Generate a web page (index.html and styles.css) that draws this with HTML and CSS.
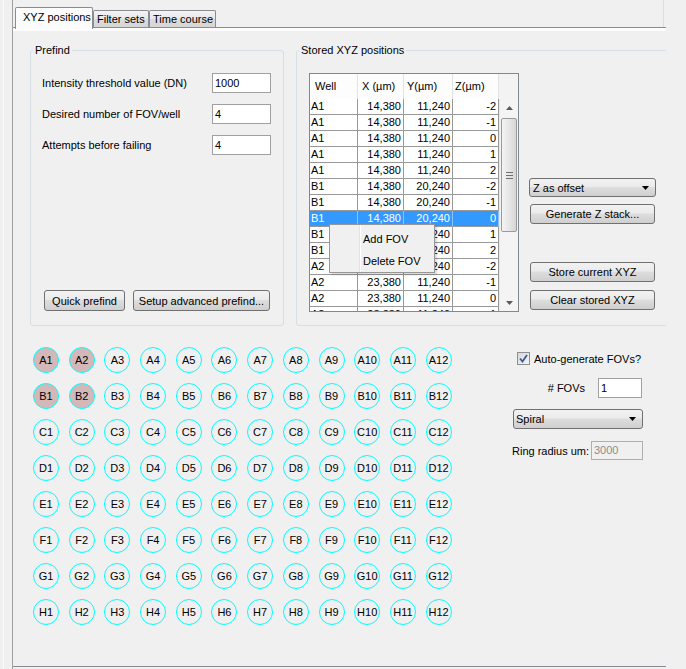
FILE: index.html
```html
<!DOCTYPE html>
<html>
<head>
<meta charset="utf-8">
<title>XYZ positions</title>
<link rel="stylesheet" href="styles.css">
</head>
<body>
<div class="screen">
  <div class="rail"></div>
  <div class="window">
    <div class="tabs">
      <div class="tab tab-active tab-xyz">XYZ positions</div>
      <div class="tab tab-idle tab-filter">Filter sets</div>
      <div class="tab tab-idle tab-time">Time course</div>
    </div>
    <div class="panel">
      <div class="top-row">
        <fieldset class="group group-prefind">
          <legend>Prefind</legend>
          <div class="prefind-body">
            <div class="field-row"><span class="label">Intensity threshold value (DN)</span><span class="input input-prefind">1000</span></div>
            <div class="field-row"><span class="label">Desired number of FOV/well</span><span class="input input-prefind">4</span></div>
            <div class="field-row"><span class="label">Attempts before failing</span><span class="input input-prefind">4</span></div>
            <div class="btn-row">
              <span class="btn btn-quick">Quick prefind</span>
              <span class="btn btn-setup">Setup advanced prefind...</span>
            </div>
          </div>
        </fieldset>
        <fieldset class="group group-stored">
          <legend>Stored XYZ positions</legend>
          <div class="stored-body">
            <div class="table">
              <div class="thead">
                <span class="th th-well">Well</span>
                <span class="th th-x">X (µm)</span>
                <span class="th th-y">Y(µm)</span>
                <span class="th th-z">Z(µm)</span>
                <span class="th th-corner"></span>
              </div>
              <div class="tbody-wrap">
                <div class="tbody">
                  <div class="tr"><span class="td td-well">A1</span><span class="td">14,380</span><span class="td">11,240</span><span class="td">-2</span></div>
                  <div class="tr"><span class="td td-well">A1</span><span class="td">14,380</span><span class="td">11,240</span><span class="td">-1</span></div>
                  <div class="tr"><span class="td td-well">A1</span><span class="td">14,380</span><span class="td">11,240</span><span class="td">0</span></div>
                  <div class="tr"><span class="td td-well">A1</span><span class="td">14,380</span><span class="td">11,240</span><span class="td">1</span></div>
                  <div class="tr"><span class="td td-well">A1</span><span class="td">14,380</span><span class="td">11,240</span><span class="td">2</span></div>
                  <div class="tr"><span class="td td-well">B1</span><span class="td">14,380</span><span class="td">20,240</span><span class="td">-2</span></div>
                  <div class="tr"><span class="td td-well">B1</span><span class="td">14,380</span><span class="td">20,240</span><span class="td">-1</span></div>
                  <div class="tr tr-selected"><span class="td td-well">B1</span><span class="td">14,380</span><span class="td">20,240</span><span class="td">0</span></div>
                  <div class="tr"><span class="td td-well">B1</span><span class="td">14,380</span><span class="td">20,240</span><span class="td">1</span></div>
                  <div class="tr"><span class="td td-well">B1</span><span class="td">14,380</span><span class="td">20,240</span><span class="td">2</span></div>
                  <div class="tr"><span class="td td-well">A2</span><span class="td">23,380</span><span class="td">11,240</span><span class="td">-2</span></div>
                  <div class="tr"><span class="td td-well">A2</span><span class="td">23,380</span><span class="td">11,240</span><span class="td">-1</span></div>
                  <div class="tr"><span class="td td-well">A2</span><span class="td">23,380</span><span class="td">11,240</span><span class="td">0</span></div>
                  <div class="tr"><span class="td td-well">A2</span><span class="td">23,380</span><span class="td">11,240</span><span class="td">1</span></div>
                </div>
                <div class="vscroll">
                  <div class="vs-btn"><svg class="vs-arrow" width="7" height="4" viewBox="0 0 7 4"><path d="M0 4 L3.5 0 L7 4 Z" fill="#5a5a5a"/></svg></div>
                  <div class="vs-thumb"><span class="grip"></span><span class="grip"></span><span class="grip"></span></div>
                  <div class="vs-fill"></div>
                  <div class="vs-btn"><svg class="vs-arrow" width="7" height="4" viewBox="0 0 7 4"><path d="M0 0 L7 0 L3.5 4 Z" fill="#5a5a5a"/></svg></div>
                </div>
              </div>
              <div class="ctx-menu">
                <div class="ctx-item">Add FOV</div>
                <div class="ctx-item">Delete FOV</div>
              </div>
            </div>
            <div class="stored-controls">
              <div class="combo combo-z"><span>Z as offset</span><svg width="7" height="4" viewBox="0 0 7 4"><path d="M0 0 L7 0 L3.5 4 Z" fill="#000"/></svg></div>
              <span class="btn btn-side btn-gen">Generate Z stack...</span>
              <span class="btn btn-side btn-store">Store current XYZ</span>
              <span class="btn btn-side btn-clear">Clear stored XYZ</span>
            </div>
          </div>
        </fieldset>
      </div>
      <div class="bottom-row">
        <div class="plate">
          <div class="well well-sel">A1</div><div class="well well-sel">A2</div><div class="well">A3</div><div class="well">A4</div><div class="well">A5</div><div class="well">A6</div><div class="well">A7</div><div class="well">A8</div><div class="well">A9</div><div class="well">A10</div><div class="well">A11</div><div class="well">A12</div>
          <div class="well well-sel">B1</div><div class="well well-sel">B2</div><div class="well">B3</div><div class="well">B4</div><div class="well">B5</div><div class="well">B6</div><div class="well">B7</div><div class="well">B8</div><div class="well">B9</div><div class="well">B10</div><div class="well">B11</div><div class="well">B12</div>
          <div class="well">C1</div><div class="well">C2</div><div class="well">C3</div><div class="well">C4</div><div class="well">C5</div><div class="well">C6</div><div class="well">C7</div><div class="well">C8</div><div class="well">C9</div><div class="well">C10</div><div class="well">C11</div><div class="well">C12</div>
          <div class="well">D1</div><div class="well">D2</div><div class="well">D3</div><div class="well">D4</div><div class="well">D5</div><div class="well">D6</div><div class="well">D7</div><div class="well">D8</div><div class="well">D9</div><div class="well">D10</div><div class="well">D11</div><div class="well">D12</div>
          <div class="well">E1</div><div class="well">E2</div><div class="well">E3</div><div class="well">E4</div><div class="well">E5</div><div class="well">E6</div><div class="well">E7</div><div class="well">E8</div><div class="well">E9</div><div class="well">E10</div><div class="well">E11</div><div class="well">E12</div>
          <div class="well">F1</div><div class="well">F2</div><div class="well">F3</div><div class="well">F4</div><div class="well">F5</div><div class="well">F6</div><div class="well">F7</div><div class="well">F8</div><div class="well">F9</div><div class="well">F10</div><div class="well">F11</div><div class="well">F12</div>
          <div class="well">G1</div><div class="well">G2</div><div class="well">G3</div><div class="well">G4</div><div class="well">G5</div><div class="well">G6</div><div class="well">G7</div><div class="well">G8</div><div class="well">G9</div><div class="well">G10</div><div class="well">G11</div><div class="well">G12</div>
          <div class="well">H1</div><div class="well">H2</div><div class="well">H3</div><div class="well">H4</div><div class="well">H5</div><div class="well">H6</div><div class="well">H7</div><div class="well">H8</div><div class="well">H9</div><div class="well">H10</div><div class="well">H11</div><div class="well">H12</div>
        </div>
        <div class="fov-opts">
          <div class="check-row">
            <span class="checkbox"><svg width="9" height="9" viewBox="0 0 9 9"><path d="M1 4.5 L3.5 7.5 L8 1" fill="none" stroke="#3c5a9a" stroke-width="1.8"/></svg></span>
            <span>Auto-generate FOVs?</span>
          </div>
          <div class="fovs-row">
            <span># FOVs</span>
            <span class="input input-fovs">1</span>
          </div>
          <div class="combo combo-spiral"><span>Spiral</span><svg width="7" height="4" viewBox="0 0 7 4"><path d="M0 0 L7 0 L3.5 4 Z" fill="#000"/></svg></div>
          <div class="ring-row">
            <span>Ring radius um:</span>
            <span class="input input-ring">3000</span>
          </div>
        </div>
      </div>
    </div>
  </div>
</div>
</body>
</html>
```
FILE: styles.css
```css
* { box-sizing: border-box; }
html, body { margin: 0; padding: 0; }
body {
  background: #f0f0f0;
  font-family: "Liberation Sans", Arial, sans-serif;
  font-size: 11px;
  color: #000;
  width: 686px;
  height: 669px;
  overflow: hidden;
}
.screen { display: flex; height: 669px; }
.rail { width: 1px; margin-left: 3px; background: #fbfbfb; flex: none; }
.window {
  margin-left: 8px;
  width: 654px;
  height: 669px;
  border-left: 1px solid #a0a0a0;
  overflow: hidden;
  flex: none;
}

/* tabs */
.tabs {
  display: flex;
  align-items: flex-end;
  height: 27px;
  width: 651px;
  border-right: 1px solid #d5dfe5;
  padding-left: 2px;
}
.tab {
  border: 1px solid #898c95;
  border-bottom: none;
  border-radius: 2px 2px 0 0;
  line-height: 13px;
  white-space: nowrap;
  flex: none;
}
.tab-active {
  height: 22px;
  margin-bottom: -2px;
  padding: 3px 0 0 7px;
  background: #fcfcfc;
  position: relative;
  z-index: 1;
  width: 78px;
}
.tab-idle {
  height: 17px;
  padding: 2px 0 0 3px;
  background: linear-gradient(#f4f4f4, #e8e8e8 50%, #dcdcdc 51%, #d6d6d6);
}
.tab-filter { width: 56px; margin-left: 0; }
.tab-time { width: 67px; }

/* panel */
.panel {
  width: 700px;
  height: 640px;
  border-top: 1px solid #898c95;
  border-bottom: 1px solid #898c95;
  box-shadow: inset 0 3px 0 #fcfcfc;
}
.top-row {
  display: flex;
  gap: 12px;
  padding: 16px 0 0 17px;
}
.group {
  margin: 0;
  padding: 0;
  border: 1px solid #d5dfe5;
  border-radius: 3px;
  min-width: 0;
}
.group legend {
  margin-left: 2px;
  padding: 0 2px;
  line-height: 13px;
}
.group-prefind { width: 254px; flex: none; }
.group-stored { flex: 1; }

.prefind-body {
  padding: 16px 12px 14px 11px;
  display: flex;
  flex-direction: column;
  gap: 11px;
}
.field-row {
  display: flex;
  align-items: center;
  justify-content: space-between;
  height: 20px;
}
.input {
  display: block;
  height: 20px;
  border: 1px solid #a0a0a0;
  background: #fff;
  padding: 0 2px;
  line-height: 18px;
}
.input-prefind { width: 59px; }

.btn-row {
  display: flex;
  gap: 8px;
  margin-top: 124px;
  padding-left: 2px;
}
.btn {
  display: flex;
  align-items: center;
  justify-content: center;
  height: 21px;
  border: 1px solid #707070;
  border-radius: 3px;
  background: linear-gradient(#f2f2f2, #ebebeb 45%, #dddddd 50%, #cfcfcf);
  white-space: nowrap;
}
.btn-quick { width: 81px; }
.btn-setup { width: 137px; }

/* stored */
.stored-body {
  padding: 16px 0 0 12px;
  display: flex;
  gap: 10px;
  align-items: flex-start;
}
.table {
  position: relative;
  width: 210px;
  height: 239px;
  border: 1px solid #828790;
  background: #fff;
  flex: none;
}
.thead {
  display: grid;
  grid-template-columns: 48px 46px 49px 46px 19px;
  height: 25px;
}
.th {
  border-right: 1px solid #e3e3e3;
  padding-left: 4px;
  line-height: 25px;
  background: #fdfdfd;
}
.th-well { padding-left: 5px; }
.th-x { padding-left: 4px; }
.th-y { padding-left: 3px; }
.th-z { padding-left: 2px; }
.th-corner { border-right: none; background: #f3f3f3; }
.tbody-wrap {
  display: flex;
  height: 212px;
  overflow: hidden;
}
.tbody { width: 189px; flex: none; }
.tr {
  display: grid;
  grid-template-columns: 48px 46px 49px 46px;
  height: 16px;
}
.td {
  border-right: 1px solid #999;
  border-bottom: 1px solid #999;
  line-height: 15px;
  text-align: right;
  padding: 0 2px 0 1px;
}
.td-well { text-align: left; }
.tr-selected .td {
  background: #3399ff;
  color: #fff;
  border-right-color: #8fc3f7;
}
.vscroll {
  width: 19px;
  display: flex;
  flex-direction: column;
  background: #f4f4f4;
  border-left: 1px solid #e8e8e8;
}
.vs-btn {
  height: 17px;
  display: flex;
  align-items: center;
  justify-content: center;
  flex: none;
}
.vs-thumb {
  margin: 2px 1px 0 1px;
  height: 114px;
  border: 1px solid #9a9a9a;
  border-radius: 2px;
  background: linear-gradient(90deg, #f4f4f4, #e6e6e6 50%, #d6d6d6);
  display: flex;
  flex-direction: column;
  align-items: center;
  justify-content: center;
  gap: 2px;
  flex: none;
}
.grip { width: 7px; height: 1px; background: #6f6f6f; }
.vs-fill { flex: 1; }

.ctx-menu {
  position: absolute;
  left: 19px;
  top: 150px;
  width: 106px;
  height: 49px;
  border: 1px solid #979797;
  background: linear-gradient(90deg, #f0f0f0 29px, #e2e3e3 29px, #e2e3e3 30px, #ffffff 30px, #ffffff 31px, #f0f0f0 31px);
  padding-top: 3px;
  box-shadow: 2px 2px 2px rgba(0,0,0,0.15);
}
.ctx-item {
  height: 22px;
  line-height: 22px;
  padding-left: 33px;
}

.stored-controls {
  display: flex;
  flex-direction: column;
  margin-top: 105px;
  width: 127px;
  flex: none;
}
.combo {
  display: flex;
  align-items: center;
  justify-content: space-between;
  border: 1px solid #707070;
  border-radius: 3px;
  background: linear-gradient(#f2f2f2, #ebebeb 45%, #dddddd 50%, #cfcfcf);
  padding: 0 6px 0 3px;
}
.combo-z { height: 19px; width: 127px; }
.btn-side { width: 125px; height: 20px; margin-left: 1px; }
.btn-gen { margin-top: 7px; }
.btn-store { margin-top: 38px; }
.btn-clear { margin-top: 8px; }

/* plate */
.bottom-row {
  display: flex;
  padding-left: 20px;
  margin-top: 21px;
}
.plate {
  width: 429px;
  flex: none;
  display: grid;
  grid-template-columns: repeat(12, 35.7px);
  grid-auto-rows: 36px;
}
.well {
  width: 26px;
  height: 26px;
  border: 1.2px solid #00ffff;
  border-radius: 50%;
  display: flex;
  align-items: center;
  justify-content: center;
  line-height: 13px;
}
.well-sel { background: #d4b8b8; }

.fov-opts {
  margin-left: 50px;
  width: 131px;
  display: flex;
  flex-direction: column;
  align-items: flex-start;
}
.check-row {
  display: flex;
  align-items: center;
  gap: 4px;
  margin: 5px 0 0 5px;
  height: 13px;
}
.checkbox {
  width: 13px;
  height: 13px;
  border: 1px solid #8e8f8f;
  background: linear-gradient(135deg, #d8d8d8, #f4f4f4);
  display: flex;
  align-items: center;
  justify-content: center;
}
.fovs-row {
  display: flex;
  align-items: center;
  justify-content: flex-end;
  gap: 13px;
  width: 130px;
  margin-top: 13px;
}
.input-fovs { width: 44px; }
.combo-spiral {
  width: 130px;
  height: 20px;
  margin: 11px 0 0 1px;
  padding-left: 2px;
  padding-right: 6px;
}
.ring-row {
  display: flex;
  align-items: center;
  justify-content: space-between;
  width: 131px;
  margin-top: 12px;
}
.input-ring {
  width: 52px;
  height: 19px;
  line-height: 17px;
  background: #f0f0f0;
  border-color: #afafaf;
  color: #8d8d8d;
}
```
